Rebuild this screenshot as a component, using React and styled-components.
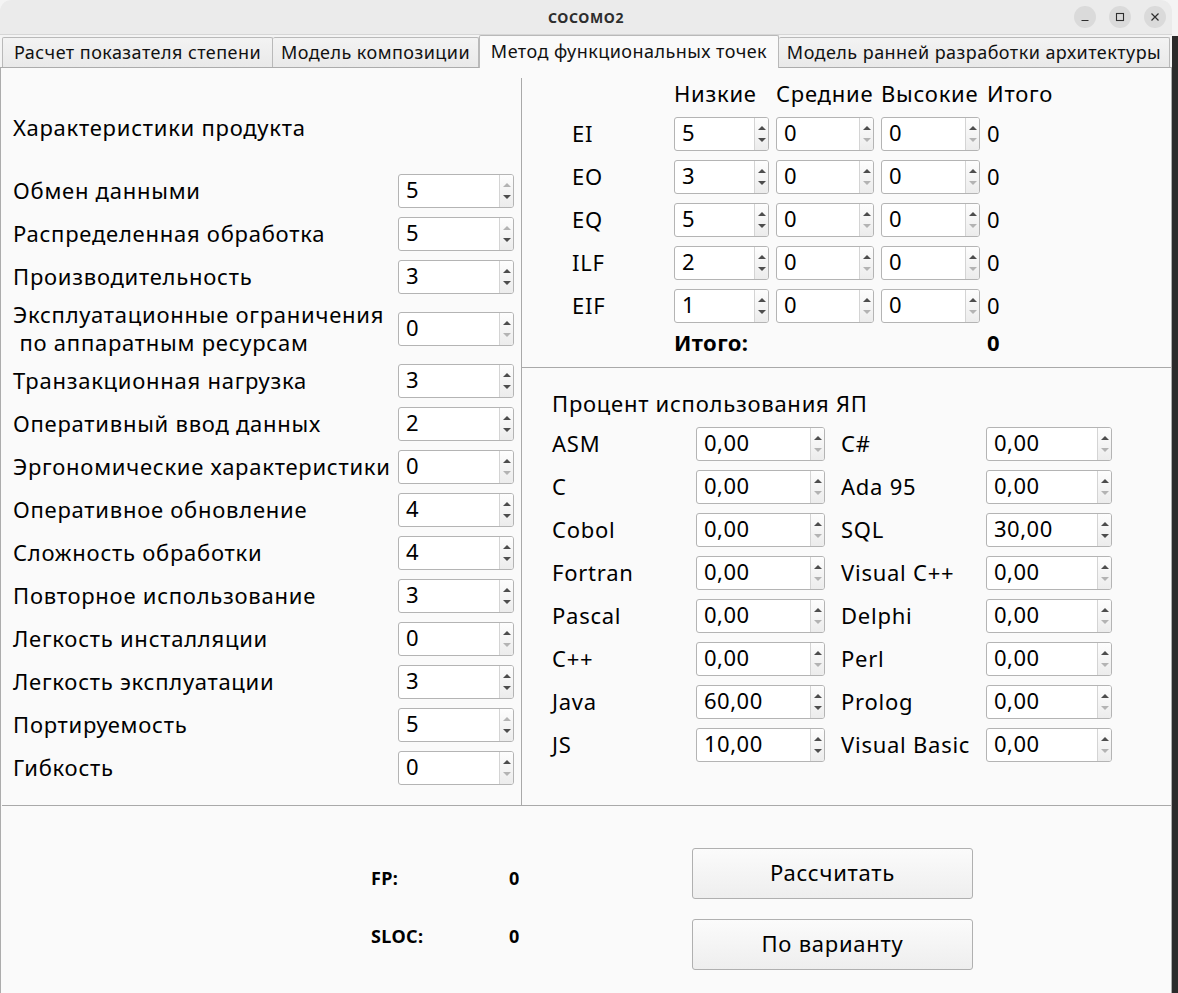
import React from 'react';
import styled, { createGlobalStyle } from 'styled-components';

const GlobalStyle = createGlobalStyle`
  html, body {
    margin: 0;
    padding: 0;
  }
  body {
    font-family: "Noto Sans", "Open Sans", sans-serif;
    color: #000;
  }
`;

const Screen = styled.div`
  display: flex;
  height: 993px;
  overflow: hidden;
  background: linear-gradient(to bottom, #f4f4f4 0 36px, #2b2b2b 36px);
`;

const Window = styled.div`
  width: 1172px;
  display: flex;
  flex-direction: column;
  background: #fafafa;
  border-radius: 11px 11px 0 0;
  overflow: hidden;
`;

const TitleBar = styled.div`
  height: 34px;
  flex: none;
  display: grid;
  grid-template-columns: 1fr auto 1fr;
  align-items: center;
  background: #ebebeb;
  border-bottom: 1px solid #d6d6d6;
`;

const Title = styled.div`
  grid-column: 2;
  font-size: 14px;
  font-weight: 700;
  color: #2e2e2e;
  letter-spacing: 0.6px;
`;

const Controls = styled.div`
  grid-column: 3;
  justify-self: end;
  display: flex;
  gap: 13px;
  padding-right: 6px;
`;

const ControlButton = styled.div`
  width: 22px;
  height: 22px;
  border-radius: 50%;
  background: #dadada;
  display: flex;
  align-items: center;
  justify-content: center;
`;

const TabBar = styled.div`
  height: 32px;
  flex: none;
  display: flex;
  align-items: flex-end;
  padding-left: 2px;
  background: #f4f4f4;
  position: relative;
  z-index: 1;
`;

const Tab = styled.div`
  box-sizing: border-box;
  width: ${p => p.$w}px;
  height: ${p => (p.$active ? 33 : 30)}px;
  margin-bottom: ${p => (p.$active ? -1 : 0)}px;
  padding-bottom: 2px;
  display: flex;
  align-items: center;
  justify-content: center;
  font-size: 18px;
  letter-spacing: 0.45px;
  white-space: nowrap;
  color: #111;
  border: 1px solid #b9b9b9;
  border-bottom: none;
  border-left-width: ${p => (p.$first || p.$active ? 1 : 0)}px;
  background: ${p => (p.$active ? '#fafafa' : 'linear-gradient(#f3f3f3, #e9e9e9)')};
  border-radius: 2px 2px 0 0;
`;

const Pane = styled.div`
  flex: 1;
  display: flex;
  flex-direction: column;
  border: 1px solid #acacac;
  border-bottom: none;
  background: #fafafa;
`;

const Upper = styled.div`
  height: 738px;
  box-sizing: border-box;
  flex: none;
  display: grid;
  grid-template-columns: 519px 1px 1fr;
  border-bottom: 1px solid #a9a9a9;
  margin-left: 1px;
`;

const VLine = styled.div`
  background: #a9a9a9;
  margin-top: 10px;
`;

const LeftColumn = styled.div`
  padding: 45px 7px 0 11px;
`;

const Heading = styled.div`
  font-size: 22px;
  letter-spacing: 0.75px;
  line-height: 28px;
  padding-bottom: 3px;
  white-space: nowrap;
  margin-bottom: ${p => p.$gap}px;
`;

const FactorGrid = styled.div`
  display: grid;
  grid-template-columns: 1fr 116px;
  row-gap: 9px;
  align-items: center;
`;

const Label = styled.div`
  font-size: 22px;
  letter-spacing: ${p => (p.$bold ? 0.4 : 0.75)}px;
  line-height: 28px;
  padding-bottom: 3px;
  white-space: nowrap;
  font-weight: ${p => (p.$bold ? 700 : 400)};
`;

const TwoLineLabel = styled(Label)`
  margin: -3px 0 -4px;
`;

const TotalLabel = styled(Label)`
  margin-top: -4px;
`;

const RightColumn = styled.div`
  display: flex;
  flex-direction: column;
`;

const CountSection = styled.div`
  height: 300px;
  box-sizing: border-box;
  border-bottom: 1px solid #a9a9a9;
  padding: 11px 0 0 50px;
`;

const CountGrid = styled.div`
  display: grid;
  grid-template-columns: 95px 95px 98px 99px auto;
  column-gap: 7px;
  row-gap: 9px;
  align-items: center;
`;

const ColumnHead = styled(Label)`
  margin-bottom: -2px;
`;

const LangSection = styled.div`
  padding: 21px 0 0 30px;
`;

const LangGrid = styled.div`
  display: grid;
  grid-template-columns: 144px 129px 161px 126px;
  row-gap: 9px;
  align-items: center;
  margin-top: 7px;
`;

const LangLabel = styled(Label)`
  padding-left: ${p => (p.$second ? 16 : 0)}px;
`;

const Lower = styled.div`
  flex: 1;
  display: flex;
  padding-left: 370px;
`;

const Results = styled.div`
  width: 321px;
  display: grid;
  grid-template-columns: 138px auto;
  grid-auto-rows: 20px;
  row-gap: 38px;
  align-content: start;
  padding-top: 62px;
`;

const ResultText = styled.div`
  font-size: 18px;
  letter-spacing: 0.4px;
  line-height: 20px;
  font-weight: 700;
`;

const Buttons = styled.div`
  display: flex;
  flex-direction: column;
  gap: 20px;
  padding-top: 42px;
`;

const PushButton = styled.button`
  width: 281px;
  height: 51px;
  box-sizing: border-box;
  border: 1px solid #b0b0b0;
  border-radius: 3px;
  background: linear-gradient(#fbfbfb, #eeeeee);
  font-family: inherit;
  font-size: 22px;
  letter-spacing: 0.75px;
  color: #000;
  padding: 0 0 3px;
`;

const SpinFrame = styled.div`
  box-sizing: border-box;
  width: ${p => p.$w}px;
  height: 34px;
  display: flex;
  background: #fff;
  border: 1px solid #b4b4b4;
  border-radius: 3px;
  overflow: hidden;
`;

const SpinValue = styled.span`
  flex: 1;
  padding: 0 0 3px 7px;
  font-size: 22px;
  letter-spacing: 0.5px;
  line-height: 29px;
`;

const SpinButtons = styled.div`
  width: 14px;
  flex: none;
  border-left: 1px solid #d4d4d4;
  background: linear-gradient(#fdfdfd, #ececec);
  display: flex;
  flex-direction: column;
  align-items: center;
  justify-content: space-between;
  padding: 8px 0;
  box-sizing: border-box;
`;

const Arrow = styled.span`
  width: 0;
  height: 0;
  border-left: 4px solid transparent;
  border-right: 4px solid transparent;
  ${p => (p.$dir === 'up' ? 'border-bottom' : 'border-top')}: 4px solid
    ${p => (p.$enabled ? '#4d4d4d' : '#b3b3b3')};
`;

const SpinBox = ({ value, min = 0, max = 99, decimals = 0, width }) => (
  <SpinFrame $w={width}>
    <SpinValue>{decimals ? value.toFixed(decimals).replace('.', ',') : value}</SpinValue>
    <SpinButtons>
      <Arrow $dir="up" $enabled={value < max} />
      <Arrow $dir="down" $enabled={value > min} />
    </SpinButtons>
  </SpinFrame>
);

const factors = [
  ['Обмен данными', 5],
  ['Распределенная обработка', 5],
  ['Производительность', 3],
  [['Эксплуатационные ограничения', '\u00a0по аппаратным ресурсам'], 0],
  ['Транзакционная нагрузка', 3],
  ['Оперативный ввод данных', 2],
  ['Эргономические характеристики', 0],
  ['Оперативное обновление', 4],
  ['Сложность обработки', 4],
  ['Повторное использование', 3],
  ['Легкость инсталляции', 0],
  ['Легкость эксплуатации', 3],
  ['Портируемость', 5],
  ['Гибкость', 0],
];

const counts = [
  ['EI', 5],
  ['EO', 3],
  ['EQ', 5],
  ['ILF', 2],
  ['EIF', 1],
];

const languages = [
  ['ASM', 0, 'C#', 0],
  ['C', 0, 'Ada 95', 0],
  ['Cobol', 0, 'SQL', 30],
  ['Fortran', 0, 'Visual C++', 0],
  ['Pascal', 0, 'Delphi', 0],
  ['C++', 0, 'Perl', 0],
  ['Java', 60, 'Prolog', 0],
  ['JS', 10, 'Visual Basic', 0],
];

const tabs = [
  ['Расчет показателя степени', 271],
  ['Модель композиции', 206],
  ['Метод функциональных точек', 300],
  ['Модель ранней разработки архитектуры', 391],
];

export default function App() {
  return (
    <>
      <GlobalStyle />
      <Screen>
        <Window>
          <TitleBar>
            <Title>COCOMO2</Title>
            <Controls>
              <ControlButton>
                <svg width="10" height="10" viewBox="0 0 10 10">
                  <path d="M1.5 8.5h7" stroke="#2e2e2e" strokeWidth="1.2" />
                </svg>
              </ControlButton>
              <ControlButton>
                <svg width="10" height="10" viewBox="0 0 10 10">
                  <rect x="1.5" y="1.5" width="7" height="7" fill="none" stroke="#2e2e2e" strokeWidth="1.1" />
                </svg>
              </ControlButton>
              <ControlButton>
                <svg width="10" height="10" viewBox="0 0 10 10">
                  <path d="M1.5 1.5l7 7M8.5 1.5l-7 7" stroke="#2e2e2e" strokeWidth="1.2" />
                </svg>
              </ControlButton>
            </Controls>
          </TitleBar>

          <TabBar>
            {tabs.map(([name, w], i) => (
              <Tab key={name} $w={w} $first={i === 0} $active={i === 2}>
                {name}
              </Tab>
            ))}
          </TabBar>

          <Pane>
            <Upper>
              <LeftColumn>
                <Heading $gap={30}>Характеристики продукта</Heading>
                <FactorGrid>
                  {factors.map(([name, v], i) => (
                    <React.Fragment key={i}>
                      {Array.isArray(name) ? (
                        <TwoLineLabel>
                          {name[0]}
                          <br />
                          {name[1]}
                        </TwoLineLabel>
                      ) : (
                        <Label>{name}</Label>
                      )}
                      <SpinBox value={v} max={5} width={116} />
                    </React.Fragment>
                  ))}
                </FactorGrid>
              </LeftColumn>

              <VLine />

              <RightColumn>
                <CountSection>
                  <CountGrid>
                    <span />
                    <ColumnHead>Низкие</ColumnHead>
                    <ColumnHead>Средние</ColumnHead>
                    <ColumnHead>Высокие</ColumnHead>
                    <ColumnHead>Итого</ColumnHead>
                    {counts.map(([name, v]) => (
                      <React.Fragment key={name}>
                        <Label>{name}</Label>
                        <SpinBox value={v} width={95} />
                        <SpinBox value={0} width={98} />
                        <SpinBox value={0} width={99} />
                        <Label>0</Label>
                      </React.Fragment>
                    ))}
                    <span />
                    <TotalLabel $bold>Итого:</TotalLabel>
                    <span />
                    <span />
                    <TotalLabel $bold>0</TotalLabel>
                  </CountGrid>
                </CountSection>

                <LangSection>
                  <Heading $gap={0}>Процент использования ЯП</Heading>
                  <LangGrid>
                    {languages.map(([a, av, b, bv]) => (
                      <React.Fragment key={a}>
                        <LangLabel>{a}</LangLabel>
                        <SpinBox value={av} max={100} decimals={2} width={129} />
                        <LangLabel $second>{b}</LangLabel>
                        <SpinBox value={bv} max={100} decimals={2} width={126} />
                      </React.Fragment>
                    ))}
                  </LangGrid>
                </LangSection>
              </RightColumn>
            </Upper>

            <Lower>
              <Results>
                <ResultText>FP:</ResultText>
                <ResultText>0</ResultText>
                <ResultText>SLOC:</ResultText>
                <ResultText>0</ResultText>
              </Results>
              <Buttons>
                <PushButton>Рассчитать</PushButton>
                <PushButton>По варианту</PushButton>
              </Buttons>
            </Lower>
          </Pane>
        </Window>
      </Screen>
    </>
  );
}
